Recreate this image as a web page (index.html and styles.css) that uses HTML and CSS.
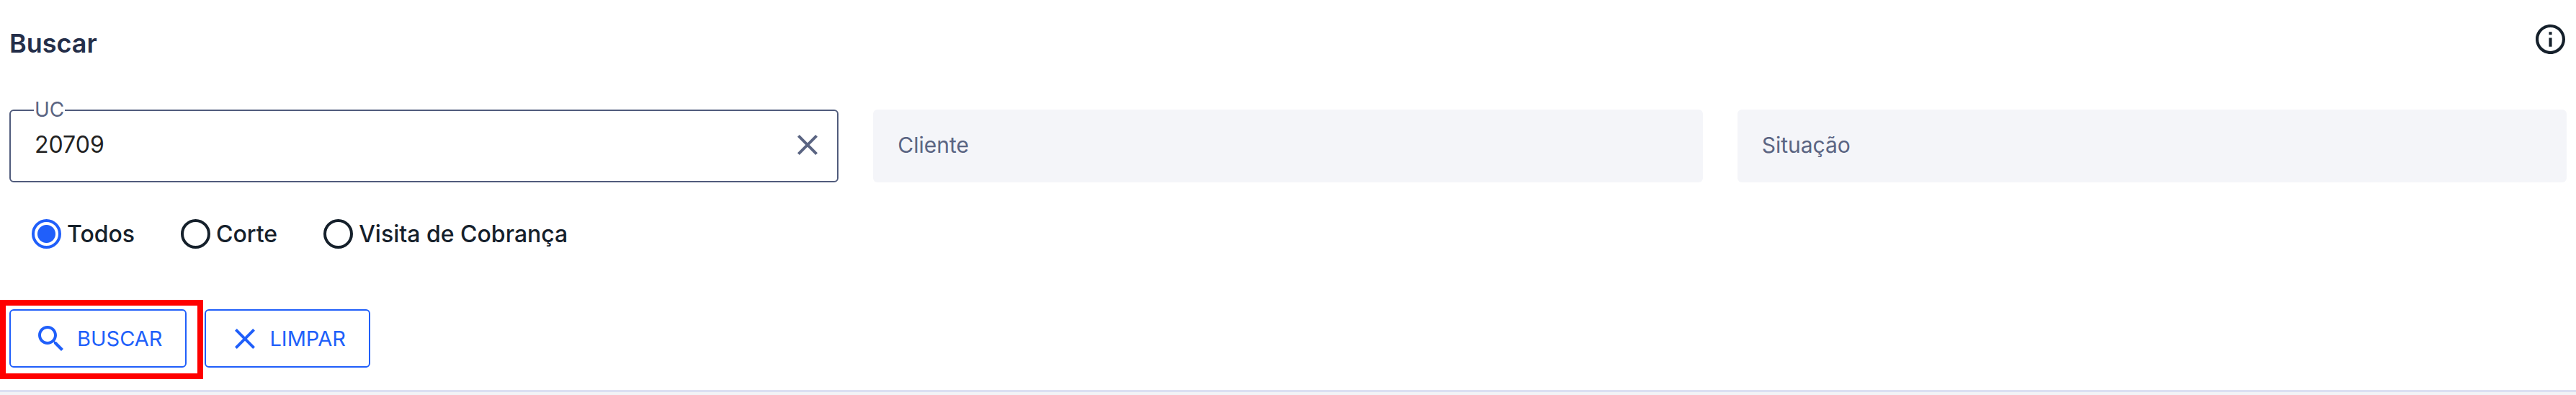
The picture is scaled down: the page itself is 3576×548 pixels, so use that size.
FILE: index.html
```html
<!DOCTYPE html>
<html lang="pt-BR">
<head>
    <meta charset="UTF-8">
    <meta name="viewport" content="width=device-width, initial-scale=1.0">
    <title>Buscar</title>
    <link rel="stylesheet" href="styles.css">
</head>
<body>
    <main class="search-panel">
        <header class="panel-header">
            <h1 class="panel-title">Buscar</h1>
            <button type="button" class="icon-button" aria-label="Informações">
                <svg class="info-icon" viewBox="2 2 20 20" aria-hidden="true">
                    <path fill="currentColor" d="M11 7h2v2h-2zm0 4h2v6h-2zm1-9C6.48 2 2 6.48 2 12s4.48 10 10 10 10-4.48 10-10S17.52 2 12 2zm0 18c-4.41 0-8-3.59-8-8s3.59-8 8-8 8 3.59 8 8-3.59 8-8 8z"/>
                </svg>
            </button>
        </header>

        <form class="search-form">
            <div class="fields">
                <div class="field field-filled">
                    <input class="field-input" id="uc" name="uc" type="text" value="20709">
                    <label class="field-label" for="uc">UC</label>
                    <button type="button" class="icon-button clear-button" aria-label="Limpar UC">
                        <svg class="close-icon" viewBox="4 4 16 16" aria-hidden="true">
                            <path fill="currentColor" d="M19 6.41 17.59 5 12 10.59 6.41 5 5 6.41 10.59 12 5 17.59 6.41 19 12 13.41 17.59 19 19 17.59 13.41 12z"/>
                        </svg>
                    </button>
                </div>
                <div class="field">
                    <input class="field-input" id="cliente" name="cliente" type="text">
                    <label class="field-label" for="cliente">Cliente</label>
                </div>
                <div class="field">
                    <input class="field-input" id="situacao" name="situacao" type="text">
                    <label class="field-label" for="situacao">Situação</label>
                </div>
            </div>

            <div class="options">
                <label class="option"><input class="option-radio" type="radio" name="tipo" value="todos" checked>Todos</label>
                <label class="option"><input class="option-radio" type="radio" name="tipo" value="corte">Corte</label>
                <label class="option"><input class="option-radio" type="radio" name="tipo" value="visita">Visita de Cobrança</label>
            </div>

            <div class="actions">
                <button type="submit" class="action-button highlighted">
                    <svg class="search-icon" viewBox="3 3 18 18" aria-hidden="true">
                        <path fill="currentColor" d="M15.5 14h-.79l-.28-.27C15.41 12.59 16 11.11 16 9.5 16 5.91 13.09 3 9.5 3S3 5.91 3 9.5 5.91 16 9.5 16c1.61 0 3.09-.59 4.23-1.57l.27.28v.79l5 4.99L20.49 19zm-6 0C7.01 14 5 11.99 5 9.5S7.01 5 9.5 5 14 7.01 14 9.5 11.99 14 9.5 14z"/>
                    </svg>
                    BUSCAR
                </button>
                <button type="reset" class="action-button">
                    <svg class="close-icon" viewBox="4 4 16 16" aria-hidden="true">
                        <path fill="currentColor" d="M19 6.41 17.59 5 12 10.59 6.41 5 5 6.41 10.59 12 5 17.59 6.41 19 12 13.41 17.59 19 19 17.59 13.41 12z"/>
                    </svg>
                    LIMPAR
                </button>
            </div>
        </form>
    </main>
</body>
</html>
```
FILE: styles.css
```css
* {
    box-sizing: border-box;
}

body {
    margin: 0;
    background-color: #f2f3f6;
    color: #15202b;
    font-family: Inter, "Liberation Sans", sans-serif;
}

button,
input {
    font-family: inherit;
}

.search-panel {
    padding: 32px 13px 31px;
    background-color: #fff;
    border-bottom: 3px solid #dcdff2;
}

.panel-header {
    display: flex;
    justify-content: space-between;
    align-items: flex-start;
    height: 48px;
    margin-bottom: 72px;
}

.panel-title {
    margin: 8px 0 0;
    font-size: 36px;
    line-height: 40px;
    font-weight: 600;
    color: #242e49;
}

.icon-button {
    display: flex;
    padding: 2px;
    border: none;
    background: none;
    color: inherit;
    cursor: pointer;
}

.info-icon {
    width: 41px;
    height: 41px;
}

.close-icon {
    width: 32px;
    height: 32px;
}

.search-icon {
    width: 36px;
    height: 36px;
}

/* Fields */
.fields {
    display: grid;
    grid-template-columns: repeat(3, 1fr);
    gap: 48px;
}

.field {
    position: relative;
    display: flex;
    align-items: center;
    height: 101px;
    padding-bottom: 4px;
    border-radius: 6px;
    background-color: #f4f5f9;
    color: #5a6482;
}

.field-input {
    flex: 1;
    min-width: 0;
    height: 100%;
    padding: 0 33px;
    border: none;
    outline: none;
    background: none;
    font-size: 32px;
    color: #222;
}

/* Label rests inside an empty field */
.field-label {
    position: absolute;
    left: 34px;
    font-size: 30px;
    line-height: 32px;
    pointer-events: none;
}

.field-filled {
    border: 2px solid #505b7c;
    background-color: #fff;
}

/* and moves over the border once it has a value */
.field-filled .field-label {
    top: -18px;
    left: 32px;
    padding: 0 1px;
    background-color: #fff;
    font-size: 28px;
}

.clear-button {
    margin-right: 23px;
}

/* Radios */
.options {
    display: flex;
    gap: 64px;
    margin: 51px 31px 84px;
}

.option {
    display: flex;
    align-items: center;
    gap: 8px;
    font-size: 32px;
    line-height: 41px;
    font-weight: 500;
}

.option-radio {
    appearance: none;
    width: 41px;
    height: 41px;
    margin: 0;
    border: 4px solid #15202b;
    border-radius: 50%;
}

.option-radio:checked {
    border-color: #205ffa;
    background: radial-gradient(circle, #205ffa 12px, transparent 13px);
}

/* Buttons */
.actions {
    display: flex;
    gap: 25px;
}

.action-button {
    position: relative;
    display: flex;
    align-items: center;
    gap: 18px;
    height: 81px;
    padding: 0 32px 0 38px;
    border: 2px solid #205ffa;
    border-radius: 6px;
    background-color: #fff;
    color: #205ffa;
    font-size: 29px;
    cursor: pointer;
}

.highlighted::after {
    content: "";
    position: absolute;
    inset: -15px -25px -18px -15px;
    border: 8px solid #f00;
}
```
